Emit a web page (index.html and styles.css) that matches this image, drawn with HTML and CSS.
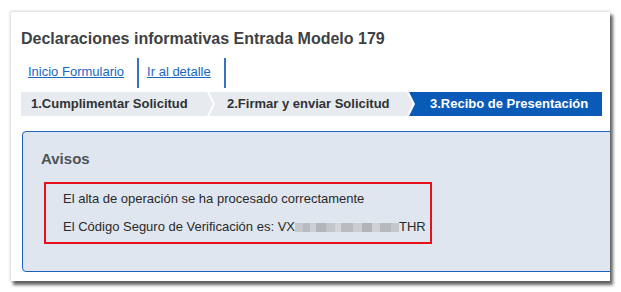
FILE: index.html
```html
<!DOCTYPE html>
<html lang="es">
<head>
<meta charset="utf-8">
<title>Declaraciones informativas</title>
<link rel="stylesheet" href="styles.css">
</head>
<body>
<div class="card">
  <h1 class="title">Declaraciones informativas Entrada Modelo 179</h1>
  <nav class="links">
    <a href="#" class="link">Inicio Formulario</a>
    <a href="#" class="link">Ir al detalle</a>
  </nav>
  <div class="steps">
    <div class="step step-1">1.Cumplimentar Solicitud</div>
    <div class="step step-2">2.Firmar y enviar Solicitud</div>
    <div class="step step-3">3.Recibo de Presentación</div>
  </div>
  <section class="avisos">
    <h2 class="avisos-title">Avisos</h2>
    <div class="msgbox">
      <p class="msg">El alta de operación se ha procesado correctamente</p>
      <p class="msg">El Código Seguro de Verificación es: VX<span class="blur"></span>THR</p>
    </div>
  </section>
</div>
</body>
</html>
```
FILE: styles.css
```css
html, body {
  margin: 0;
  padding: 0;
  background: #ffffff;
}
body {
  font-family: "Liberation Sans", Arial, sans-serif;
  width: 621px;
  height: 292px;
  overflow: hidden;
}
.card {
  margin: 11px 0 0 10px;
  width: 600px;
  height: 270px;
  box-sizing: border-box;
  background: #fff;
  border-top: 1px solid #e4e4e4;
  border-left: 1px solid #e4e4e4;
  box-shadow: 0 0 3px rgba(0,0,0,0.12), 3px 4px 3px rgba(0,0,0,0.6);
  overflow: hidden;
  padding: 0 0 0 10px;
}
.title {
  margin: 0;
  padding-top: 17px;
  font-size: 16px;
  line-height: 19px;
  font-weight: bold;
  color: #3d4145;
}
.links {
  display: flex;
  align-items: stretch;
  margin-top: 10px;
  height: 30px;
}
.link {
  font-size: 13px;
  color: #1a66c2;
  text-decoration: underline;
  padding: 7px 13px 0 8px;
  border-right: 2px solid #3a72bd;
  line-height: 14px;
}
.link:first-child {
  padding-left: 7px;
}
.steps {
  display: flex;
  margin-top: 4px;
  height: 24px;
  width: 581px;
  background: #fff;
}
.step {
  font-size: 13px;
  font-weight: bold;
  color: #2f3336;
  line-height: 24px;
  white-space: nowrap;
  background: #e7eaee;
  box-sizing: border-box;
}
.step-1 {
  width: 192px;
  padding-left: 10px;
  clip-path: polygon(0 0, calc(100% - 6px) 0, 100% 50%, calc(100% - 6px) 100%, 0 100%);
}
.step-2 {
  width: 204px;
  margin-left: -4px;
  padding-left: 18px;
  clip-path: polygon(0 0, calc(100% - 6px) 0, 100% 50%, calc(100% - 6px) 100%, 0 100%, 6px 50%);
}
.step-3 {
  flex: 1;
  margin-left: -4px;
  padding-left: 21px;
  background: #0a5bb8;
  color: #fff;
  clip-path: polygon(0 0, 100% 0, 100% 100%, 0 100%, 6px 50%);
}
.avisos {
  margin-top: 15px;
  margin-left: 1px;
  width: 620px;
  height: 141px;
  box-sizing: border-box;
  background: #dfe6ef;
  border: 1.5px solid #1d62b8;
  border-radius: 4px 0 0 4px;
  padding: 18px 0 0 18px;
}
.avisos-title {
  margin: 0;
  font-size: 15px;
  line-height: 17px;
  font-weight: bold;
  color: #4f5357;
}
.msgbox {
  margin-top: 15px;
  margin-left: 3px;
  width: 388px;
  height: 62px;
  box-sizing: border-box;
  border: 2px solid #e8101a;
  padding: 1px 0 0 17px;
}
.msg {
  margin: 0;
  font-size: 13px;
  line-height: 28px;
  color: #2a2a2a;
}
.blur {
  display: inline-block;
  width: 104px;
  height: 9px;
  vertical-align: -1px;
  background:
    linear-gradient(90deg, #c4c7cb 0 8%, #b8bbbf 8% 14%, #cdd0d3 14% 20%, #b2b5b9 20% 30%, #c3c6ca 30% 38%, #d3d5d8 38% 44%, #b8bbbf 44% 56%, #cbcdd0 56% 64%, #b0b3b7 64% 74%, #cfd1d4 74% 82%, #b6b9bd 82% 92%, #c5c8cb 92%);
}
```
